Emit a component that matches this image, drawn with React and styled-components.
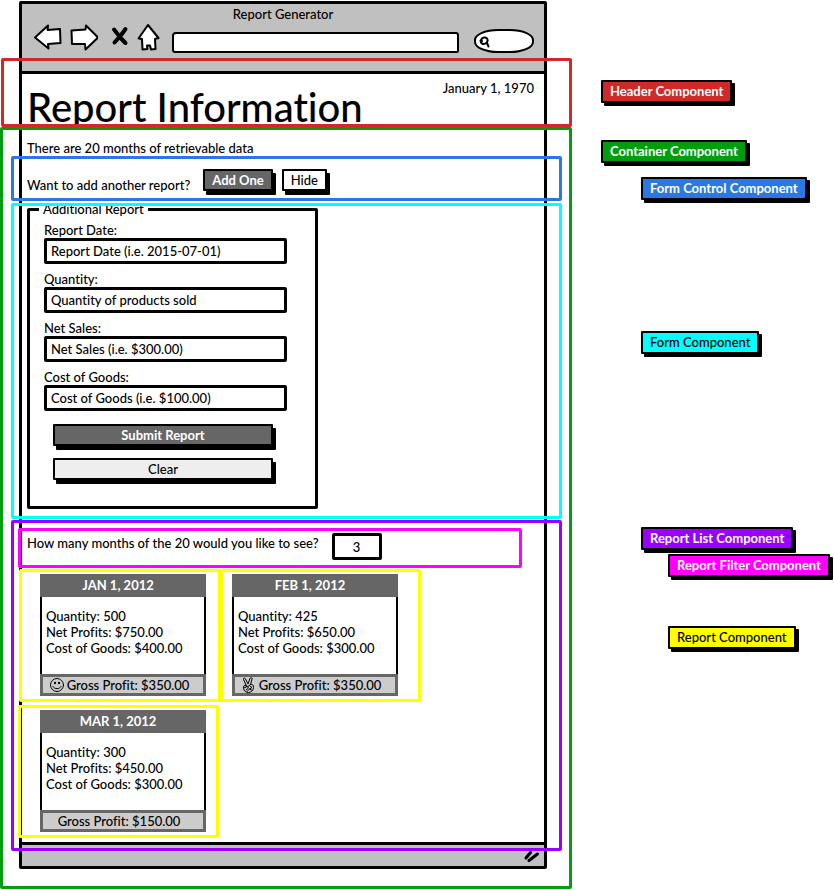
import React from "react";
import styled, { createGlobalStyle, css } from "styled-components";

const GlobalStyle = createGlobalStyle`
  * { box-sizing: border-box; }
  body {
    margin: 0;
    background: #fff;
    color: #000;
    font: 13px/16px Lato, "Open Sans", sans-serif;
    font-weight: 500;
    font-variant-ligatures: none;
  }
  h1, h2, p { margin: 0; }
  button, input { font: inherit; color: inherit; }
`;

const palette = {
  red: "#cf2a27",
  green: "#009e0f",
  blue: "#2b78e4",
  cyan: "#00ffff",
  purple: "#9900ff",
  magenta: "#ff00ff",
  yellow: "#ffff00",
};

/* A coloured frame drawn over a section; `reach` is how far it extends on each side. */
const annotated = css`
  position: relative;
  &::after {
    content: "";
    position: absolute;
    inset: ${(p) => p.$reach};
    border: 3px solid ${(p) => palette[p.$tone]};
    border-radius: 2px;
    pointer-events: none;
  }
`;

const Page = styled.div`
  display: grid;
  grid-template-columns: minmax(0, 1fr) 233px;
  column-gap: 30px;
`;

const Window = styled.div`
  margin: 1px 24px 22px 19px;
  border: 3px solid #000;
  border-radius: 2px;
`;

const Chrome = styled.div`
  height: 70px;
  border-bottom: 3px solid #000;
  background: #c0c0c0;
`;

const WindowTitle = styled.p`
  line-height: 20px;
  text-align: center;
`;

const Toolbar = styled.div`
  display: flex;
  height: 29px;
  padding: 0 10px 0 12px;
  align-items: flex-end;
  gap: 11px;
`;

const Nav = styled.nav`
  display: flex;
  align-self: flex-start;
  gap: 8px;
`;

const IconButton = styled.button`
  display: flex;
  padding: 0;
  border: 0;
  background: none;
`;

const AddressBar = styled.input`
  flex: 1;
  min-width: 0;
  height: 21px;
  padding: 0 6px;
  border: 2px solid #000;
  border-radius: 4px 3px 2px 3px;
  background: #fff;
`;

const SearchBox = styled.label`
  display: flex;
  width: 60px;
  height: 24px;
  margin-left: 4px;
  padding-left: 3px;
  align-items: center;
  border: 2px solid #000;
  border-radius: 24px / 11px;
  background: #fff;
`;

const SearchInput = styled.input`
  width: 36px;
  padding: 0;
  border: 0;
  background: none;
  outline: 0;
`;

const Header = styled.header`
  ${annotated}
  display: flex;
  height: 53px;
  padding: 5px 10px 0 5px;
  justify-content: space-between;
`;

const Title = styled.h1`
  padding-top: 4px;
  font-size: 40px;
  font-weight: 500;
  line-height: 48px;
  white-space: nowrap;
`;

const Today = styled.time`
  line-height: 18px;
  white-space: nowrap;
`;

const Container = styled.main`
  ${annotated}
`;

const Summary = styled.p`
  padding: 13px 5px 1px;
`;

const FormControl = styled.section`
  ${annotated}
  display: flex;
  height: 43px;
  padding: 12px 5px 0;
  align-items: flex-start;
  gap: 9px;
`;

const Prompt = styled.p`
  margin-right: 4px;
  padding-top: 8px;
`;

const Button = styled.button`
  height: 22px;
  padding: 0 7px;
  border: 2px solid #000;
  border-radius: 1px;
  box-shadow: 3px 4px 0 #000;
  background: ${(p) => (p.$dark ? "#666" : p.$muted ? "#eee" : "#fff")};
  color: ${(p) => (p.$dark ? "#fff" : "#000")};
  font-weight: ${(p) => (p.$dark ? 700 : 500)};
  line-height: 16px;
`;

const FormSection = styled.section`
  ${annotated}
  margin-top: 5px;
`;

const FormClip = styled.form`
  overflow: hidden;
  padding: 0 5px 10px;
`;

const Fieldset = styled.fieldset`
  max-width: 291px;
  min-width: 0;
  height: 308px;
  margin: -4px 0 0;
  padding: 5px 28px 0 14px;
  border: 3px solid #000;
  border-radius: 2px;
`;

const Legend = styled.legend`
  margin-left: -5px;
  padding: 0 4px;
  line-height: 16px;
`;

const Field = styled.label`
  display: block;
  margin-bottom: 7px;
`;

const TextInput = styled.input`
  display: block;
  width: 100%;
  height: 26px;
  padding: 0 4px;
  border: 3px solid #000;
  border-radius: 2px;
  background: #fff;
  &::placeholder { color: #000; opacity: 1; }
`;

const Actions = styled.div`
  display: grid;
  padding: 6px 14px 0 9px;
  gap: 12px;
`;

const ReportList = styled.section`
  ${annotated}
  padding-bottom: 10px;
`;

const Filter = styled.div`
  ${annotated}
  display: flex;
  height: 55px;
  padding: 14px 5px 0;
  gap: 13px;
`;

const FilterLabel = styled.label`
  padding-top: 2px;
`;

const CountInput = styled.input`
  width: 50px;
  height: 27px;
  padding: 0;
  border: 3px solid #000;
  border-radius: 2px;
  background: #fff;
  text-align: center;
`;

const Cards = styled.div`
  display: grid;
  grid-template-columns: repeat(auto-fill, 166px);
  padding-left: 18px;
  gap: 14px 26px;
`;

const Card = styled.article`
  ${annotated}
`;

const CardTitle = styled.h2`
  height: 23px;
  background: #666;
  color: #fff;
  font-size: 13px;
  font-weight: 700;
  line-height: 23px;
  text-align: center;
  padding-right: 10px;
`;

const CardBody = styled.div`
  height: 77px;
  padding: 11px 4px 0;
  border: solid #000;
  border-width: 0 2px;
`;

const CardFooter = styled.p`
  display: flex;
  height: 22px;
  padding-right: 8px;
  align-items: center;
  justify-content: center;
  gap: 2px;
  border: 3px solid #666;
  background: #ccc;
`;

const StatusBar = styled.footer`
  display: flex;
  height: 24px;
  padding: 0 3px;
  align-items: center;
  justify-content: flex-end;
  border-top: 3px solid #000;
  background: #c0c0c0;
`;

const Legends = styled.aside`
  display: flex;
  flex-direction: column;
  align-items: flex-start;
  padding-top: 80px;
`;

const Tag = styled.span`
  height: 23px;
  margin: ${(p) => p.$gap}px 0 0 ${(p) => p.$indent}px;
  padding: 0 7px;
  border: 2px solid #000;
  border-radius: 1px;
  box-shadow: 3px 3px 0 #000;
  background: ${(p) => palette[p.$tone]};
  color: ${(p) => (p.$light ? "#fff" : "#000")};
  font-weight: ${(p) => (p.$light ? 700 : 500)};
  line-height: 19px;
  white-space: nowrap;
`;

const ink = { stroke: "#000", strokeWidth: 2, strokeLinejoin: "round", strokeLinecap: "round" };

const BackIcon = () => (
  <svg width="28" height="27" viewBox="0 0 28 27" fill="#fff" {...ink}>
    <path d="M1 13.5 14 1.5 13.6 6 26 5 26.5 19 14 20 14.5 24.5Z" />
  </svg>
);
const ForwardIcon = () => (
  <svg width="28" height="27" viewBox="0 0 28 27" fill="#fff" {...ink}>
    <path d="M1.5 6.5 2 20 15 20 15.5 25.5 28 13.5 16 1.5 15.5 5.5Z" />
  </svg>
);
const StopIcon = () => (
  <svg width="23" height="27" viewBox="0 0 23 27" fill="none" stroke="#000" strokeLinecap="round">
    <path strokeWidth="4" d="M8 5.500 12 10.500M15 14.500 19.500 19" />
    <path strokeWidth="4" d="M19.500 5 15.500 10.500M12.500 14 8.500 18.500" />
    <path strokeWidth="3" d="M10 8 18 17M18 7 10 17" />
  </svg>
);
const HomeIcon = () => (
  <svg width="24" height="27" viewBox="0 0 24 27" fill="#fff" {...ink}>
    <path d="M11 1 21.500 14 18 15 18.500 25 14 25.500 13 21.500 10 21.500 10.500 25 5.500 25.500 5 15 1.500 14.500Z" />
  </svg>
);
const SearchIcon = () => (
  <svg width="12" height="13" viewBox="0 0 12 13" fill="none" {...ink}>
    <path d="M5 2.500C7.500 2 9 4 8.500 6 8 8.500 5 9.500 3 8.500 .5 7 2 3 5 2.500ZM1.500 5.500 3 6M8 8 9.500 11.500" />
  </svg>
);
const SmileIcon = () => (
  <svg width="16" height="16" viewBox="0 0 16 16" fill="none" stroke="#000" strokeWidth="1" strokeLinecap="round">
    <circle cx="8" cy="8" r="6.500" />
    <path d="M4 9.500C5.500 12.500 10.500 12.500 12 9.500" />
    <ellipse cx="6" cy="6" rx=".6" ry="1" fill="#000" />
    <ellipse cx="10" cy="6" rx=".6" ry="1" fill="#000" />
  </svg>
);
const PeaceIcon = () => (
  <svg width="16" height="16" viewBox="0 0 16 16" fill="none" stroke="#000" strokeWidth="1" strokeLinecap="round" strokeLinejoin="round">
    <path d="M5 8 2.500 2.500C2 1 4 .5 4.500 2L7 7 9 1.500C9.500 0 11.500.5 11 2L9.500 7.500" />
    <path d="M5 8C3 8 2 9.500 2.500 11.500 3 14 5 15.500 7.500 15.500 10.500 15.500 12.500 13 12.500 10.500 12.500 8 11.500 7 9.500 7.500L7 9.500 4 8.500M3 11 6 9.500 7.500 11 5 13M9 9 11 10.500 8.500 12 6 14.500M8.500 12 10.500 13" />
  </svg>
);
const GripIcon = () => (
  <svg width="18" height="14" viewBox="0 0 18 14" fill="none" stroke="#000" strokeWidth="3" strokeLinecap="round">
    <path d="M3 9 7.500 3.500M6 11.500 14.500 5" />
  </svg>
);

const fields = [
  ["Report Date:", "Report Date (i.e. 2015-07-01)"],
  ["Quantity:", "Quantity of products sold"],
  ["Net Sales:", "Net Sales (i.e. $300.00)"],
  ["Cost of Goods:", "Cost of Goods (i.e. $100.00)"],
];

const reports = [
  { date: "JAN 1, 2012", quantity: 500, net: "$750.00", cost: "$400.00", gross: "$350.00", icon: <SmileIcon />, reach: "-5px -15px -6px -21px" },
  { date: "FEB 1, 2012", quantity: 425, net: "$650.00", cost: "$300.00", gross: "$350.00", icon: <PeaceIcon />, reach: "-5px -23px -6px -12px" },
  { date: "MAR 1, 2012", quantity: 300, net: "$450.00", cost: "$300.00", gross: "$150.00", reach: "-5px -13px -6px -22px" },
];

const tags = [
  { text: "Header Component", tone: "red", light: true, gap: 0, indent: 0 },
  { text: "Container Component", tone: "green", light: true, gap: 37, indent: 0 },
  { text: "Form Control Component", tone: "blue", light: true, gap: 14, indent: 40 },
  { text: "Form Component", tone: "cyan", gap: 131, indent: 40 },
  { text: "Report List Component", tone: "purple", light: true, gap: 173, indent: 40 },
  { text: "Report Filter Component", tone: "magenta", light: true, gap: 4, indent: 67 },
  { text: "Report Component", tone: "yellow", gap: 49, indent: 67 },
];

export default function App() {
  return (
    <>
      <GlobalStyle />
      <Page>
        <Window>
          <Chrome>
            <WindowTitle>Report Generator</WindowTitle>
            <Toolbar>
              <Nav aria-label="Browser">
                <IconButton aria-label="Back"><BackIcon /></IconButton>
                <IconButton aria-label="Forward"><ForwardIcon /></IconButton>
                <IconButton aria-label="Stop"><StopIcon /></IconButton>
                <IconButton aria-label="Home"><HomeIcon /></IconButton>
              </Nav>
              <AddressBar aria-label="Address" />
              <SearchBox>
                <SearchIcon />
                <SearchInput type="search" aria-label="Search" />
              </SearchBox>
            </Toolbar>
          </Chrome>

          <Header $tone="red" $reach="-16px -28px 0 -21px">
            <Title>Report Information</Title>
            <Today dateTime="1970-01-01">January 1, 1970</Today>
          </Header>

          <Container $tone="green" $reach="0 -28px -47px -22px">
            <Summary>There are 20 months of retrievable data</Summary>
            <FormControl $tone="blue" $reach="-1px -18px -1px -11px">
              <Prompt>Want to add another report?</Prompt>
              <Button type="button" $dark>Add One</Button>
              <Button type="button">Hide</Button>
            </FormControl>

            <FormSection $tone="cyan" $reach="-2px -18px 0 -11px">
              <FormClip>
                <Fieldset>
                  <Legend>Additional Report</Legend>
                  {fields.map(([label, hint]) => (
                    <Field key={label}>
                      {label}
                      <TextInput placeholder={hint} />
                    </Field>
                  ))}
                  <Actions>
                    <Button type="submit" $dark>Submit Report</Button>
                    <Button type="reset" $muted>Clear</Button>
                  </Actions>
                </Fieldset>
              </FormClip>
            </FormSection>

            <ReportList $tone="purple" $reach="1px -18px -9px -11px">
              <Filter $tone="magenta" $reach="9px 22px 6px -4px">
                <FilterLabel htmlFor="months">How many months of the 20 would you like to see?</FilterLabel>
                <CountInput id="months" defaultValue="3" />
              </Filter>
              <Cards>
                {reports.map((r) => (
                  <Card key={r.date} $tone="yellow" $reach={r.reach}>
                    <CardTitle>{r.date}</CardTitle>
                    <CardBody>
                      <p>Quantity: {r.quantity}</p>
                      <p>Net Profits: {r.net}</p>
                      <p>Cost of Goods: {r.cost}</p>
                    </CardBody>
                    <CardFooter>
                      {r.icon}
                      <span>Gross Profit: {r.gross}</span>
                    </CardFooter>
                  </Card>
                ))}
              </Cards>
            </ReportList>
          </Container>

          <StatusBar><GripIcon /></StatusBar>
        </Window>

        <Legends aria-label="Component names">
          {tags.map((t) => (
            <Tag key={t.text} $tone={t.tone} $light={t.light} $gap={t.gap} $indent={t.indent}>{t.text}</Tag>
          ))}
        </Legends>
      </Page>
    </>
  );
}
